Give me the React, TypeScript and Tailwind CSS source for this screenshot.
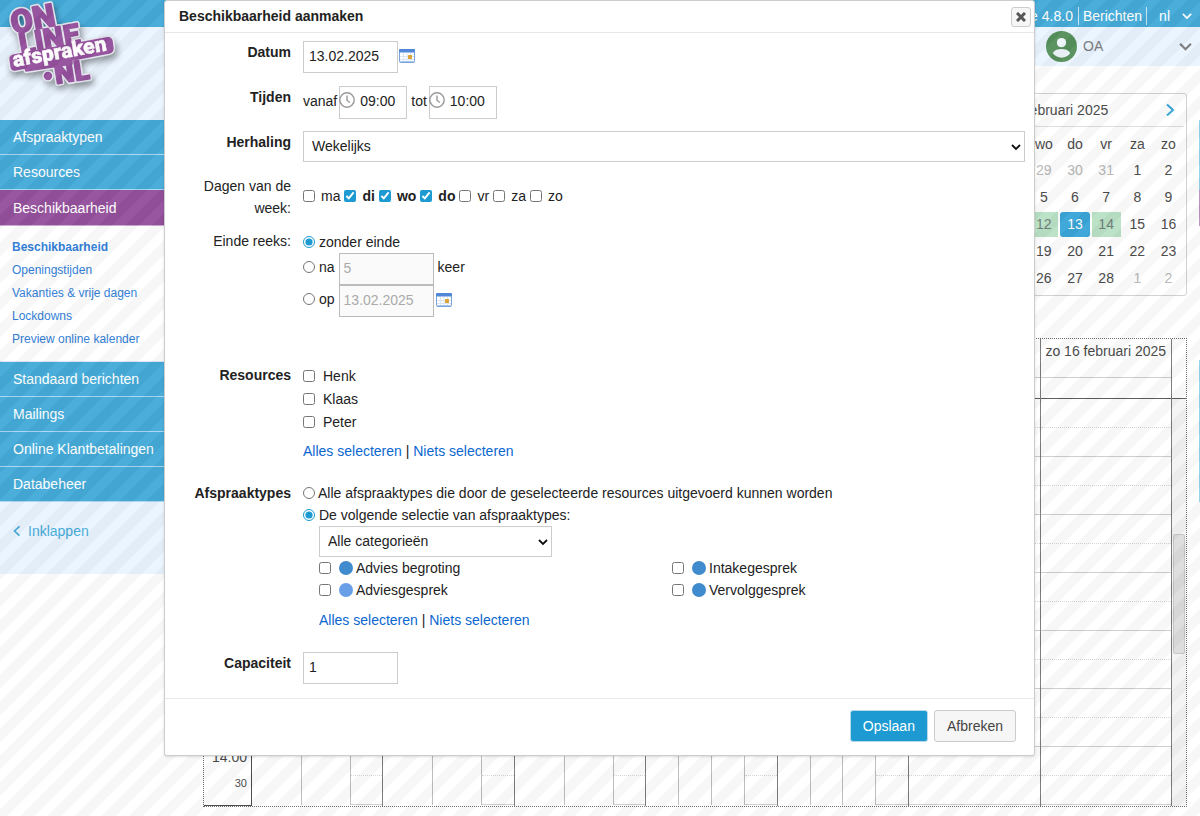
import { useState } from "react";
import type { ReactNode } from "react";

interface MenuItem {
    label: string;
    active?: boolean;
    sub?: string[];
}

interface Day {
    label: string;
    // rows: half hour lines are only drawn where nothing is planned
    cols: { width: string; rows: boolean }[];
}

const menu: MenuItem[] = [
    { label: "Afspraaktypen" },
    { label: "Resources" },
    {
        label: "Beschikbaarheid",
        active: true,
        sub: ["Beschikbaarheid", "Openingstijden", "Vakanties & vrije dagen", "Lockdowns", "Preview online kalender"],
    },
    { label: "Standaard berichten" },
    { label: "Mailings" },
    { label: "Online Klantbetalingen" },
    { label: "Databeheer" },
];

const weekdays = ["ma", "di", "wo", "do", "vr", "za", "zo"];

const month = [
    [27, 28, 29, 30, 31, 1, 2],
    [3, 4, 5, 6, 7, 8, 9],
    [10, 11, 12, 13, 14, 15, 16],
    [17, 18, 19, 20, 21, 22, 23],
    [24, 25, 26, 27, 28, 1, 2],
];

const three = [
    { width: "flex-[50]", rows: false },
    { width: "flex-[49]", rows: false },
    { width: "flex-[32]", rows: true },
];
const four = [
    { width: "flex-1", rows: false },
    { width: "flex-1", rows: false },
    { width: "flex-1", rows: false },
    { width: "flex-1", rows: true },
];
const one = [{ width: "flex-1", rows: true }];

const days: Day[] = [
    { label: "ma 10 februari 2025", cols: three },
    { label: "di 11 februari 2025", cols: three },
    { label: "wo 12 februari 2025", cols: three },
    { label: "do 13 februari 2025", cols: four },
    { label: "vr 14 februari 2025", cols: four },
    { label: "za 15 februari 2025", cols: one },
    { label: "zo 16 februari 2025", cols: one },
];

const hours = [8, 9, 10, 11, 12, 13, 14];

function LogoShapes() {
    return (
        <>
            <text x="13" y="34" fontSize="32" transform="rotate(-11 13 34)">ON</text>
            <text x="21" y="54" fontSize="29" transform="rotate(-10 21 54)">LINE</text>
            <path d="M14 55 L106 38 Q111 37 112 41 L113 48 Q113 52 109 53 L72 60 L72 64 L26 71 L25 68 L15 70 Q11 70 11 66 L10 59 Q10 56 14 55Z" />
            <text x="56" y="84" fontSize="28" transform="rotate(-9 56 84)">NL</text>
            <circle cx="48" cy="76" r="3.5" />
        </>
    );
}

function Logo() {
    return (
        <svg
            className="h-24 w-[120px] drop-shadow-[2px_4px_3px_rgba(0,0,0,0.4)]"
            viewBox="0 0 120 96"
            role="img"
            aria-label="Online afspraken"
            fontFamily="Roboto, sans-serif"
            fontWeight="900"
            strokeLinejoin="round"
        >
            <g stroke="#e3e6ee" strokeWidth="4.5" fill="#e3e6ee">
                <LogoShapes />
            </g>
            <g fill="#914b99" stroke="#914b99" strokeWidth="1.4">
                <LogoShapes />
            </g>
            <text x="14" y="67" fontSize="21" fill="#fff" stroke="#fff" strokeWidth="0.4" transform="rotate(-10 14 67)">afspraken</text>
        </svg>
    );
}

function Chevron({ className, d }: { className: string; d: string }) {
    return (
        <svg className={className} viewBox="0 0 12 12" fill="none" stroke="currentColor" strokeWidth="2" aria-hidden="true">
            <path d={d} />
        </svg>
    );
}

const DOWN = "M1 3.5 L6 8.5 L11 3.5";
const LEFT = "M9 0.5 L3 6 L9 11.5";
const RIGHT = "M3 0.5 L9 6 L3 11.5";

function CalendarIcon() {
    return (
        <svg className="h-[14px] w-4" viewBox="0 0 16 14" aria-hidden="true">
            <rect x="0.5" y="0.5" width="15" height="13" rx="1" fill="#fff" stroke="#79a3dc" />
            <path d="M1 7.5h14M1 10.5h14M4.5 4v9M8 4v9M11.5 4v9" stroke="#dbe6f4" />
            <rect x="0" y="0" width="16" height="3.5" rx="1" fill="#5187d8" />
            <path d="M1 12.5h14" stroke="#a9c6ec" />
            <rect x="9" y="6" width="4" height="4" rx="0.5" fill="#d9a33a" />
        </svg>
    );
}

function ClockIcon() {
    return (
        <svg className="pointer-events-none absolute top-1.5 left-0 size-4" viewBox="0 0 16 16" fill="none" stroke="#999" aria-hidden="true">
            <circle cx="8" cy="8" r="7.2" strokeWidth="1.4" />
            <path d="M8 3.5V8.5L11 10.5" strokeWidth="1.4" />
        </svg>
    );
}

function Sidebar() {
    return (
        <aside className="w-[165px] shrink-0">
            <div className="bg-[#e9f4ff] pb-[31px]">
                <div className="h-[54px]" />
                <nav className="pb-0.5 whitespace-nowrap">
                    {menu.map((item) => (
                        <div key={item.label}>
                            <a
                                href="#"
                                className={
                                    item.active
                                        ? "flex h-9 items-center border-b border-[#c9a9d0] bg-[#914b99] px-[13px] text-white"
                                        : "flex h-[35px] items-center border-b border-[#a8d8f0] bg-[#40a9d8] px-[13px] text-white"
                                }
                            >
                                {item.label}
                            </a>
                            {item.sub && (
                                <ul className="border-b border-[#dfe7f2] bg-white pt-[10px] pb-[10px] text-xs text-[#2a7ad6]">
                                    {item.sub.map((s, i) => (
                                        <li key={s} className={i === 0 ? "font-bold" : ""}>
                                            <a href="#" className="block px-3 leading-[23px]">{s}</a>
                                        </li>
                                    ))}
                                </ul>
                            )}
                        </div>
                    ))}
                </nav>
                <button className="mt-[15px] flex items-center gap-1.5 px-3 leading-6 text-[#40a9d8]">
                    <Chevron className="h-3 w-2.5" d={LEFT} />
                    Inklappen
                </button>
            </div>
        </aside>
    );
}

function MonthCalendar() {
    const dayClass = (n: number, row: number) => {
        if (row === 2 && n === 13) return "bg-[#34a4d8] text-white rounded-[3px]";
        if (row === 2 && n < 15) return "bg-[#b8e0c4] text-[#6b7a76]";
        if ((row === 0 && n > 20) || (row === 4 && n < 10)) return "text-[#b5b5b5]";
        return "text-[#444]";
    };

    return (
        <div className="w-[226px] rounded-[3px] border border-[#d0d0d0] bg-white pr-[2px] pl-1">
            <div className="flex h-[33px] items-center justify-between border-b border-[#ddd] px-2 text-[#444]">
                <Chevron className="size-3 text-[#34a4d8]" d={LEFT} />
                <span className="mr-4">februari 2025</span>
                <Chevron className="size-3 text-[#34a4d8]" d={RIGHT} />
            </div>
            <table className="mt-[3px] mb-[3px] w-full table-fixed text-center">
                <thead>
                    <tr className="h-[27px] text-[#444]">
                        {weekdays.map((d) => (
                            <th key={d} className="font-normal">{d}</th>
                        ))}
                    </tr>
                </thead>
                <tbody>
                    {month.map((week, row) => (
                        <tr key={row} className="h-[27px]">
                            {week.map((n) => (
                                <td key={n} className="p-px">
                                    <div className={"leading-[25px] " + dayClass(n, row)}>{n}</div>
                                </td>
                            ))}
                        </tr>
                    ))}
                </tbody>
            </table>
        </div>
    );
}

function Agenda() {
    return (
        <div className="flex border border-dotted border-[#666] bg-white text-[#444]">
            <div className="w-12 shrink-0 border-r border-b border-[#444] text-right">
                <div className="h-[60px]" />
                {hours.map((h) => (
                    <div key={h} className="h-[58px] pr-1">
                        <div className="h-[29px] leading-5">{h}:00</div>
                        <div className="h-[29px] text-[11px] leading-[14px]">30</div>
                    </div>
                ))}
            </div>
            {days.map((day) => (
                <div key={day.label} className="min-w-0 flex-1 border-r border-[#777]">
                    <div className="h-[39px] overflow-hidden border-b border-[#ccc] text-center leading-6 whitespace-nowrap">
                        {day.label}
                    </div>
                    <div className="h-[21px] border-b border-[#555]" />
                    <div className="flex">
                        {day.cols.map((col, i) => (
                            <div key={i} className={col.width + " border-l border-[#bbb] first:border-l-0"}>
                                {hours.map((h) => (
                                    <div key={h} className="h-[58px]">
                                        <div className={col.rows ? "h-[29px] border-b border-dotted border-[#d4d4d4]" : "h-[29px]"} />
                                        <div className={col.rows ? "h-[29px] border-b border-[#ccc]" : "h-[29px]"} />
                                    </div>
                                ))}
                            </div>
                        ))}
                    </div>
                </div>
            ))}
            <div className="flex w-[14px] shrink-0 flex-col">
                <div className="h-[60px] border-b border-[#555]" />
                <div className="flex-1 bg-[#f3f3f3] px-px pt-[135px]">
                    <div className="h-[120px] rounded-[2px] border border-[#c4c4c4] bg-[#dcdcdc]" />
                </div>
            </div>
        </div>
    );
}

function Row({ label, htmlFor, bold, className, children }: { label: string; htmlFor?: string; bold?: boolean; className: string; children: ReactNode }) {
    const labelClass = (bold ? "font-bold " : "") + "w-[126px] shrink-0 pl-6 text-right leading-[22px]";
    return (
        <div className={"flex gap-3 " + className}>
            {htmlFor ? <label htmlFor={htmlFor} className={labelClass}>{label}</label> : <span className={labelClass}>{label}</span>}
            <div className="min-w-0 flex-1">{children}</div>
        </div>
    );
}

const inputClass = "h-8 w-[95px] border border-[#ccc] px-[5px] pb-[3px] bg-white";
const disabledClass = "h-8 w-[95px] border border-[#bbb] px-1 pb-[3px] bg-[#fafafa] text-[#aaa]";
const boxClass = "size-3 shrink-0 accent-[#1c9ad1]";

function TimeField({ label, value }: { label: string; value: string }) {
    return (
        <label className="flex gap-[2px] leading-[30px]">
            {label}
            <span className="relative">
                <ClockIcon />
                <input className="block h-[33px] w-[68px] border border-[#ccc] bg-transparent pb-[3px] pl-5" defaultValue={value} />
            </span>
        </label>
    );
}

function SelectAll() {
    return (
        <div className="leading-[22px]">
            <a href="#" className="text-[#0b67d0]">Alles selecteren</a> | <a href="#" className="text-[#0b67d0]">Niets selecteren</a>
        </div>
    );
}

function SelectBox({ id, className, children }: { id: string; className: string; children: ReactNode }) {
    return (
        <div className={"relative " + className}>
            <select id={id} aria-label={id} className="h-[31px] w-full appearance-none border border-[#ccc] bg-white px-2 pb-px">
                {children}
            </select>
            <svg className="pointer-events-none absolute top-[11px] right-1 size-[10px]" viewBox="0 0 10 10" fill="none" stroke="#111" strokeWidth="1.8" aria-hidden="true">
                <path d="M1 3 L5 7 L9 3" />
            </svg>
        </div>
    );
}

function TypeOption({ label, color }: { label: string; color: string }) {
    return (
        <label className="flex h-[22px] items-center">
            <input type="checkbox" className={boxClass} />
            <span className={"mr-[3px] ml-2 size-[14px] rounded-full " + color} />
            {label}
        </label>
    );
}

function AvailabilityDialog({ onClose }: { onClose: () => void }) {
    const [selected, setSelected] = useState<string[]>(["di", "wo", "do"]);

    const toggle = (day: string) => {
        setSelected(selected.includes(day) ? selected.filter((d) => d !== day) : [...selected, day]);
    };

    return (
        <div role="dialog" aria-labelledby="dialog-title" className="absolute top-0 right-[165px] left-[164px] rounded-[3px] border border-[#ccc] bg-white text-[#222] shadow-sm">
            <div className="flex h-8 items-center justify-between border-b border-[#e8e8e8] pr-[3px] pl-[14px]">
                <h1 id="dialog-title" className="pb-0.5 font-bold">Beschikbaarheid aanmaken</h1>
                <button aria-label="Sluiten" onClick={onClose} className="flex size-5 items-center justify-center rounded-[3px] border border-[#ccc] bg-[#f6f6f6]">
                    <svg className="size-[10px]" viewBox="0 0 10 10" stroke="#555" strokeWidth="3" aria-hidden="true">
                        <path d="M1 1 L9 9 M9 1 L1 9" />
                    </svg>
                </button>
            </div>

            <form className="pt-2 pr-[9px] pb-[14px]" onSubmit={(e) => e.preventDefault()}>
                <Row label="Datum" htmlFor="datum" bold className="h-[45px]">
                    <div className="flex items-center gap-px">
                        <input id="datum" className={inputClass} defaultValue="13.02.2025" />
                        <button type="button" aria-label="Kies datum" className="pb-0.5"><CalendarIcon /></button>
                    </div>
                </Row>
                <Row label="Tijden" bold className="h-[45px]">
                    <div className="flex gap-1">
                        <TimeField label="vanaf" value="09:00" />
                        <TimeField label="tot" value="10:00" />
                    </div>
                </Row>
                <Row label="Herhaling" htmlFor="herhaling" bold className="h-11">
                    <SelectBox id="herhaling" className="w-full">
                        <option>Wekelijks</option>
                        <option>Dagelijks</option>
                    </SelectBox>
                </Row>
                <Row label="Dagen van de week:" className="h-[55px]">
                    <div className="flex h-[42px] items-center gap-1">
                        {weekdays.map((day) => (
                            <label key={day} className={selected.includes(day) ? "flex items-center gap-1.5 font-bold" : "flex items-center gap-1.5"}>
                                <input type="checkbox" className={boxClass} checked={selected.includes(day)} onChange={() => toggle(day)} />
                                {day}
                            </label>
                        ))}
                    </div>
                </Row>
                <Row label="Einde reeks:" className="h-[134px]">
                    <label className="flex h-[23px] items-center gap-1">
                        <input type="radio" name="einde" className={boxClass} defaultChecked />
                        zonder einde
                    </label>
                    <div className="flex gap-1 leading-[29px]">
                        <label className="flex gap-1">
                            <input type="radio" name="einde" className={boxClass + " mt-2"} />
                            na
                        </label>
                        <input aria-label="Aantal keer" className={disabledClass} defaultValue="5" disabled />
                        keer
                    </div>
                    <div className="flex gap-1 leading-[29px]">
                        <label className="flex gap-1">
                            <input type="radio" name="einde" className={boxClass + " mt-2"} />
                            op
                        </label>
                        <input aria-label="Einddatum" className={disabledClass} defaultValue="13.02.2025" disabled />
                        <button type="button" aria-label="Kies einddatum" className="-ml-0.5 h-[30px]"><CalendarIcon /></button>
                    </div>
                </Row>
                <Row label="Resources" bold className="h-[118px]">
                    <div className="mb-[7px]">
                        {["Henk", "Klaas", "Peter"].map((name) => (
                            <label key={name} className="flex h-[23px] items-center gap-2">
                                <input type="checkbox" className={boxClass} />
                                {name}
                            </label>
                        ))}
                    </div>
                    <SelectAll />
                </Row>
                <Row label="Afspraaktypes" bold className="h-[170px]">
                    <label className="flex h-[22px] items-center gap-[3px]">
                        <input type="radio" name="types" className={boxClass} />
                        Alle afspraaktypes die door de geselecteerde resources uitgevoerd kunnen worden
                    </label>
                    <label className="flex h-[22px] items-center gap-1">
                        <input type="radio" name="types" className={boxClass} defaultChecked />
                        De volgende selectie van afspraaktypes:
                    </label>
                    <div className="pl-4">
                        <SelectBox id="categorie" className="w-[233px]">
                            <option>Alle categorieën</option>
                        </SelectBox>
                        <div className="mb-2 grid grid-cols-2">
                            <TypeOption label="Advies begroting" color="bg-[#3f8bcd]" />
                            <TypeOption label="Intakegesprek" color="bg-[#3f8bcd]" />
                            <TypeOption label="Adviesgesprek" color="bg-[#689fe8]" />
                            <TypeOption label="Vervolggesprek" color="bg-[#3f8bcd]" />
                        </div>
                        <SelectAll />
                    </div>
                </Row>
                <Row label="Capaciteit" htmlFor="capaciteit" bold className="">
                    <input id="capaciteit" className={inputClass} defaultValue="1" />
                </Row>
            </form>

            <div className="flex justify-end gap-1.5 border-t border-[#e8e8e8] pt-[11px] pr-[18px] pb-[13px]">
                <button className="h-8 rounded-[3px] border border-[#b9d9e8] bg-[#1c9ad1] px-3 text-white">Opslaan</button>
                <button onClick={onClose} className="h-8 rounded-[3px] border border-[#ccc] bg-[#f6f6f6] px-3 text-[#444]">Afbreken</button>
            </div>
        </div>
    );
}

export default function App() {
    const [open, setOpen] = useState(true);

    return (
        <div className="relative min-h-screen overflow-hidden bg-white font-['Liberation_Sans',Arial,sans-serif] text-sm text-[#222]">
            <header>
                <div className="flex h-[27px] items-center justify-end bg-[#40a9d8] pt-1 pr-2 text-white">
                    <span className="border-r border-white/70 pr-[5px] leading-[18px]">Versie 4.8.0</span>
                    <a href="#" className="border-r border-white/70 px-1 leading-[18px]">Berichten</a>
                    <button className="flex items-center gap-3 pl-3">
                        nl
                        <Chevron className="size-[10px]" d={DOWN} />
                    </button>
                </div>
                <div className="ml-[165px] flex h-[39px] items-center justify-end bg-[#e9f4ff] pr-2 text-[#777]">
                    <svg className="size-[31px]" viewBox="0 0 32 32" aria-hidden="true">
                        <circle cx="16" cy="16" r="16" fill="#528d57" />
                        <circle cx="16" cy="12" r="4.8" fill="#eef5fc" />
                        <path d="M7 23 Q9 18.5 16 18.5 Q23 18.5 25 23 Q21 27.5 16 27.5 Q11 27.5 7 23Z" fill="#eef5fc" />
                    </svg>
                    <span className="ml-1.5 w-24 pb-0.5">OA</span>
                    <Chevron className="size-[13px]" d={DOWN} />
                </div>
            </header>

            {/* the menu starts under the logo, next to the account bar */}
            <div className="flex">
                <div className="-mt-[39px]">
                    <div className="h-[39px] w-[165px] bg-[#e9f4ff]" />
                    <Sidebar />
                </div>
                <main className="min-w-0 flex-1 pt-[27px] pr-3 pl-[38px]">
                    <div className="mb-[42px] flex justify-end">
                        <MonthCalendar />
                    </div>
                    <Agenda />
                </main>
                <div className="w-px shrink-0 pt-[54px]">
                    <div className="h-[70px] bg-[#8fd0ec]" />
                    <div className="h-9 bg-[#b98fc0]" />
                    <div className="h-[134px]" />
                    <div className="h-[142px] bg-[#8fd0ec]" />
                </div>
            </div>

            <div className="absolute top-0 left-0">
                <Logo />
            </div>

            {open && (
                <>
                    <div className="absolute inset-0 bg-[linear-gradient(135deg,rgba(120,120,120,0.06)_25%,rgba(255,255,255,0.06)_25%,rgba(255,255,255,0.06)_50%,rgba(120,120,120,0.06)_50%,rgba(120,120,120,0.06)_75%,rgba(255,255,255,0.06)_75%)] bg-[size:27px_27px]" />
                    <AvailabilityDialog onClose={() => setOpen(false)} />
                </>
            )}
        </div>
    );
}
